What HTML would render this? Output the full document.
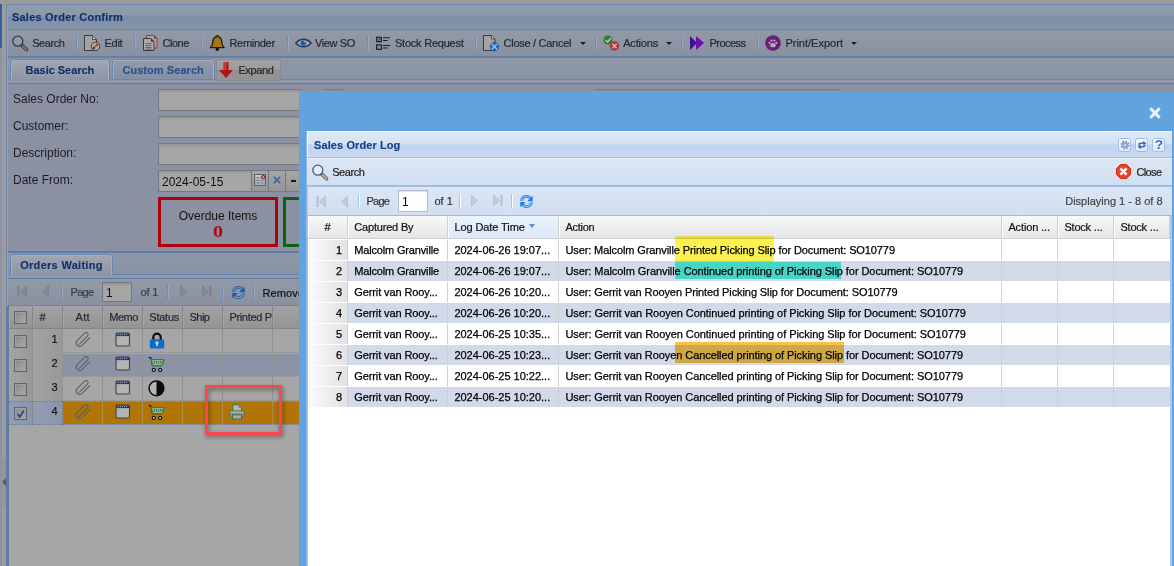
<!DOCTYPE html>
<html><head><meta charset="utf-8">
<style>
*{box-sizing:border-box;margin:0;padding:0}
html,body{width:1174px;height:566px;overflow:hidden}
body{position:relative;background:#9c9c9c;font-family:"Liberation Sans",sans-serif;font-size:11px;color:#222}
.a{position:absolute}
.t{position:absolute;white-space:nowrap;line-height:14px;font-size:11px;-webkit-text-stroke:.2px currentColor}
.b{font-weight:bold;-webkit-text-stroke:.1px currentColor}
svg{position:absolute;overflow:visible}
#bg .t{color:#25282e}
.sep{position:absolute;width:2px;top:36px;height:14px;border-left:1px solid #6f8ab3;border-right:1px solid #9ca7bb}
.inp{position:absolute;left:158px;height:22px;border:1px solid #74787f;background:#a6a6a6;box-shadow:inset 0 2px 2px #979797}
.lbl{position:absolute;left:13px;font-size:12px;line-height:14px;color:#1b1d22;white-space:nowrap}
.gh{position:absolute;top:306px;height:23px;border-right:1px solid #858585;border-left:1px solid #a4a4a4;background:linear-gradient(#a3a3a3,#9d9d9d 40%,#939393)}
.gr{position:absolute;left:9px;width:300px;height:24px;border-top:1px solid #a6a6a6;border-bottom:1px solid #9a9a9a;background:#a6a6a6}
.gr i{position:absolute;top:-1px;height:24px;width:1px;background:#929292}
.cb{position:absolute;width:13px;height:13px;border:1px solid #5f6670;background:linear-gradient(135deg,#8b8b8b,#a9a9a9);box-shadow:inset 0 0 0 1px #9f9f9f}
#win .t{color:#111}
.hd{position:absolute;top:216px;height:23px;border-right:1px solid #d0d0d0;border-left:1px solid #fff;background:linear-gradient(#f9f9f9,#e3e4e6)}
.row{position:absolute;left:308px;width:862px;height:21px;border-top:1px solid #fff;border-bottom:1px solid #fafafa;background:#fff}
.row.alt{background:#d2daea;border-bottom-color:#d2daea}
.row i{position:absolute;top:0;height:20px;width:1px;background:#d0d0d0}
.row span{position:absolute;top:3px;line-height:14px;font-size:11px;white-space:nowrap;color:#000;-webkit-text-stroke:.25px #000}
.ws{position:absolute;width:2px;height:14px;top:194px;border-left:1px solid #98c8ff;border-right:1px solid #fff}
</style></head><body>
<div id="bg">
<div class="a" style="left:0;top:0;width:1174px;height:4px;background:#9c9c9c"></div>
<div class="a" style="left:0;top:4px;width:2px;height:44px;background:#33629b"></div>
<div class="a" style="left:0;top:48px;width:2px;height:518px;background:#8a93ab"></div>
<div class="a" style="left:2px;top:4px;width:4px;height:562px;background:#9b9b9b"></div>
<div class="a" style="left:6px;top:4px;width:1168px;height:26px;border:1px solid #6c86ad;border-right:0;background:linear-gradient(#919dad 0,#8b98ab 46%,#7c8da6 50%,#8696ad 100%)"></div>
<div class="a" style="left:6px;top:30px;width:1168px;height:28px;border-left:1px solid #6c86ad;border-bottom:2px solid #647fa8;background:linear-gradient(#9299a6,#8990a1)"></div>
<div class="a" style="left:6px;top:58px;width:1168px;height:22px;border-left:1px solid #6c86ad;background:linear-gradient(#9098a7,#8792a6)"></div>
<div class="a" style="left:6px;top:79px;width:1168px;height:5px;background:#9099ab;border-top:1px solid #6c86ad;border-bottom:1px solid #607ca6;border-left:1px solid #6c86ad"></div>
<div class="a" style="left:6px;top:84px;width:1168px;height:169px;border-left:1px solid #6c86ad;border-bottom:2px solid #607ca6;background:#8b91a2"></div>
<div class="a" style="left:7px;top:5px;width:1px;height:561px;background:#93a1ba"></div>
<div class="t b" style="left:12px;top:10px;letter-spacing:0.209px;color:#102f68;">Sales Order Confirm</div>
<div class="t" style="left:32.2px;top:36px;letter-spacing:-0.429px;">Search</div>
<div class="t" style="left:104.5px;top:36px;letter-spacing:-0.267px;">Edit</div>
<div class="t" style="left:162.4px;top:36px;letter-spacing:-0.45px;">Clone</div>
<div class="t" style="left:229.4px;top:36px;letter-spacing:-0.286px;">Reminder</div>
<div class="t" style="left:315px;top:36px;letter-spacing:-0.373px;">View SO</div>
<div class="t" style="left:395px;top:36px;letter-spacing:-0.23px;">Stock Request</div>
<div class="t" style="left:503.6px;top:36px;letter-spacing:-0.283px;">Close / Cancel</div>
<div class="a" style="left:580px;top:42px;border:3px solid transparent;border-top:3px solid #1c1c1c;border-bottom:0"></div>
<div class="t" style="left:623.2px;top:36px;letter-spacing:-0.185px;">Actions</div>
<div class="a" style="left:666px;top:42px;border:3px solid transparent;border-top:3px solid #1c1c1c;border-bottom:0"></div>
<div class="t" style="left:709.4px;top:36px;letter-spacing:-0.507px;">Process</div>
<div class="t" style="left:785.4px;top:36px;letter-spacing:0.008px;">Print/Export</div>
<div class="a" style="left:851px;top:42px;border:3px solid transparent;border-top:3px solid #1c1c1c;border-bottom:0"></div>
<div class="sep" style="left:76px"></div>
<div class="sep" style="left:134px"></div>
<div class="sep" style="left:201px"></div>
<div class="sep" style="left:287px"></div>
<div class="sep" style="left:367px"></div>
<div class="sep" style="left:475px"></div>
<div class="sep" style="left:595px"></div>
<div class="sep" style="left:681px"></div>
<div class="sep" style="left:757px"></div>
<svg style="left:12px;top:35px" width="16" height="16" viewBox="0 0 16 16"><path d="M9.800 10.200L14.600 14.800" stroke="#27314d" stroke-width="3.400" stroke-linecap="round"/><path d="M10.600 11L14.500 14.700" stroke="#9e7038" stroke-width="2" stroke-linecap="round"/><circle cx="5.800" cy="6.200" r="5" fill="#959ba6" stroke="#2c3650" stroke-width="1.300"/></svg>
<svg style="left:84px;top:35px" width="16" height="16" viewBox="0 0 16 16"><path d="M.5 .5h8l4 4v11h-12z" fill="#a3a3a3" stroke="#3a3a3a"/><path d="M8.500 .8v3.700h3.700" fill="#c9c9c9" stroke="#3a3a3a" stroke-width=".8"/><circle cx="11.500" cy="11.400" r="4.300" fill="#aaa" stroke="#4a2a30" stroke-width=".9"/><path d="M9.900 13l3.200-3.200" stroke="#a86a28" stroke-width="2"/><path d="M9.300 13.600l1-1" stroke="#111" stroke-width="2"/><path d="M12.600 10.300l1-1" stroke="#c01020" stroke-width="2"/></svg>
<svg style="left:143px;top:35px" width="16" height="16" viewBox="0 0 16 16"><path d="M3.500 .5h7.500l3 3v9.500h-10.500z" fill="#a9a9a9" stroke="#b02a34"/><path d="M11 .5v3h3z" fill="#70202a"/><path d="M.5 3.500h7.500l3 3v9h-10.500z" fill="#a9a9a9" stroke="#3a3a3a"/><path d="M8 3.500v3h3z" fill="#2a2a2a"/><path d="M2.500 8.500h6M2.500 10.500h6M2.500 12.500h6M2.500 14.200h6" stroke="#5c5c5c" stroke-width=".9"/></svg>
<svg style="left:210px;top:35px" width="16" height="16" viewBox="0 0 16 16"><path d="M7.300 .6c.9 0 1.300.6 1.300 1.300 2.300.8 3.200 2.800 3.200 5.400 0 2.700 1 3.900 2.400 5.400h-13.800c1.400-1.500 2.400-2.700 2.400-5.400 0-2.600.9-4.600 3.200-5.400 0-.7.400-1.300 1.300-1.300z" fill="#a8740f" stroke="#1c1c1c" stroke-width="1.300" stroke-linejoin="round"/><circle cx="7.300" cy="14.300" r="1.700" fill="#111"/></svg>
<svg style="left:295px;top:35px" width="17" height="16" viewBox="0 0 17 16"><path d="M.8 8C3.200 5.200 5.600 4.200 8.500 4.200s5.300 1 7.700 3.800C13.800 10.800 11.400 11.800 8.500 11.800S3.200 10.800 .8 8z" fill="#9da3ae" stroke="#25355a" stroke-width="1.400"/><circle cx="8.300" cy="8" r="2.600" fill="#1456b0"/><circle cx="9.600" cy="6.800" r=".9" fill="#9da3ae"/></svg>
<svg style="left:376px;top:35px" width="16" height="16" viewBox="0 0 16 16"><rect x=".7" y="2.300" width="4.600" height="4.400" fill="none" stroke="#1c1c1c" stroke-width="1.200"/><rect x=".7" y="9.900" width="4.600" height="4.400" fill="none" stroke="#1c1c1c" stroke-width="1.200"/><path d="M7 2.800h7M7 5.500h4.600M7 10.500h7M7 13h4.500" stroke="#1c1c1c" stroke-width="1.100"/><path d="M1.900 4.400l1 1 1.500-1.900" stroke="#1c1c1c" fill="none" stroke-width=".9"/></svg>
<svg style="left:483px;top:35px" width="16" height="16" viewBox="0 0 16 16"><path d="M.5 .5h8l3.500 3.500v11.500h-11.500z" fill="#a3a3a3" stroke="#3a3a3a"/><path d="M8.500 .8v3.200h3.200" fill="#c9c9c9" stroke="#3a3a3a" stroke-width=".8"/><circle cx="11.400" cy="11.700" r="4.300" fill="#1f6ec4" stroke="#154f94" stroke-width=".6"/><path d="M8.600 8.900l5.600 5.600M14.200 8.900l-5.600 5.600" stroke="#a9c6ea" stroke-width="1.100"/></svg>
<svg style="left:603px;top:35px" width="17" height="16" viewBox="0 0 17 16"><circle cx="5" cy="5" r="4.500" fill="#2f7a34"/><path d="M2.500 5l2 2 3.500-4" stroke="#b5c5b5" stroke-width="1.600" fill="none"/><circle cx="11.500" cy="11" r="4.700" fill="#b0343c"/><path d="M9.300 8.800l4.400 4.400M13.700 8.800l-4.400 4.400" stroke="#c9b3b3" stroke-width="1.600"/></svg>
<svg style="left:690px;top:35px" width="16" height="16" viewBox="0 0 16 16"><path d="M0 1l7 7-7 7z" fill="#3a1788"/><path d="M6 1l8 7-8 7z" fill="#7409b4"/></svg>
<svg style="left:765px;top:35px" width="16" height="16" viewBox="0 0 16 16"><circle cx="8" cy="8" r="7.800" fill="#6a1f78"/><ellipse cx="8" cy="10.200" rx="2.800" ry="2.100" fill="#b9a9bd"/><circle cx="4.600" cy="7.800" r="1.100" fill="#b9a9bd"/><circle cx="6.600" cy="5.600" r="1.100" fill="#b9a9bd"/><circle cx="9.400" cy="5.600" r="1.100" fill="#b9a9bd"/><circle cx="11.400" cy="7.800" r="1.100" fill="#b9a9bd"/></svg>
<div class="a" style="left:10px;top:59px;width:100px;height:22px;border:1px solid #6c86ad;border-bottom:0;border-radius:4px 4px 0 0;background:linear-gradient(#a0a6b1,#8d94a5)"></div>
<div class="a" style="left:11px;top:60px;width:98px;height:21px;border:1px solid #a3aec2;border-bottom:0;border-radius:3px 3px 0 0"></div>
<div class="a" style="left:112px;top:59px;width:103px;height:20px;border:1px solid #6c86ad;border-bottom:0;border-radius:4px 4px 0 0;background:linear-gradient(#939ba9,#8590a6)"></div>
<div class="a" style="left:113px;top:60px;width:101px;height:19px;border:1px solid #a3aec2;border-bottom:0;border-radius:3px 3px 0 0"></div>
<div class="a" style="left:216px;top:59px;width:65px;height:22px;border:1px solid #868b94;border-radius:3px;background:linear-gradient(#a2a2a2 0,#9c9c9c 48%,#929292 52%,#959595 100%)"></div>
<svg style="left:219px;top:62px" width="14" height="16" viewBox="0 0 14 16"><path d="M4.500 0h5v8h4.500l-7 8-7-8h4.500z" fill="#b01414"/><path d="M5.500 0h1.800v8h-1.800z" fill="#c85050"/></svg>
<div class="t b" style="left:25.6px;top:63px;letter-spacing:-0.038px;color:#102f68;">Basic Search</div>
<div class="t b" style="left:122.4px;top:63px;letter-spacing:0.06px;color:#284f8c;">Custom Search</div>
<div class="t" style="left:238.4px;top:63px;letter-spacing:-0.374px;">Expand</div>
<div class="lbl" style="top:92px">Sales Order No:</div>
<div class="inp" style="top:89px;width:145px"></div>
<div class="lbl" style="top:119px">Customer:</div>
<div class="inp" style="top:116px;width:145px"></div>
<div class="lbl" style="top:146px">Description:</div>
<div class="inp" style="top:143px;width:145px"></div>
<div class="lbl" style="top:173px">Date From:</div>
<div class="inp" style="top:170px;width:94px"></div>
<div class="a" style="left:162px;top:174px;font-size:12px;line-height:16px;color:#111">2024-05-15</div>
<div class="a" style="left:251px;top:170px;width:18px;height:22px;border:1px solid #74787f;background:linear-gradient(#a6a6a6,#969696)"></div>
<svg style="left:254px;top:174px" width="12" height="12" viewBox="0 0 12 12"><rect x=".5" y=".5" width="11" height="11" fill="#b2b7c2" stroke="#5a6070"/><path d="M1 1h10v2H1z" fill="#c4c8d0"/><path d="M4 3.500v7.500M8 3.500v7.500M1 3.500h10M1 6.500h10M1 9h10" stroke="#7d8494" stroke-width=".7"/><circle cx="9.300" cy="3" r="1.600" fill="#c9a9a9" stroke="#7a0c0c" stroke-width="1"/></svg>
<div class="a" style="left:269px;top:170px;width:17px;height:22px;border:1px solid #74787f;border-left:0;background:linear-gradient(#a6a6a6,#969696)"></div>
<svg style="left:273px;top:176px" width="8" height="8" viewBox="0 0 8 8"><path d="M.8.800l6.400 6.400M7.200.800L.8 7.200" stroke="#2c62a8" stroke-width="1.500"/></svg>
<div class="a" style="left:286px;top:170px;width:17px;height:22px;border:1px solid #74787f;border-left:0;background:linear-gradient(#a6a6a6,#969696)"></div>
<div class="a" style="left:291px;top:180px;width:5px;height:2px;background:#1a1a1a"></div>
<div class="a" style="left:158px;top:197px;width:120px;height:50px;border:3px solid #b0000e"></div>
<div class="a" style="left:158px;top:209px;width:120px;text-align:center;font-size:12px;line-height:14px;color:#111">Overdue Items</div>
<div class="a" style="left:158px;top:221.500px;width:120px;text-align:center;font-family:'Liberation Serif',serif;font-weight:bold;font-size:17px;line-height:20px;color:#b00a0a;transform:scaleX(1.18)">0</div>
<div class="a" style="left:283px;top:197px;width:120px;height:50px;border:3px solid #0a640a"></div>
<div class="a" style="left:324px;top:89px;width:20px;height:22px;border:1px solid #74787f;border-radius:2px;background:#a1a1a1"></div><div class="inp" style="left:595px;top:89px;width:228px"></div><div class="a" style="left:822px;top:89px;width:18px;height:22px;border:1px solid #74787f;background:#a1a1a1"></div>
<div class="a" style="left:6px;top:253px;width:1168px;height:22px;border-left:1px solid #6c86ad;background:linear-gradient(#9098a7,#8792a6)"></div>
<div class="a" style="left:6px;top:274px;width:1168px;height:5px;background:#9099ab;border-top:1px solid #6c86ad;border-bottom:1px solid #607ca6;border-left:1px solid #6c86ad"></div>
<div class="a" style="left:10px;top:254px;width:103px;height:21px;border:1px solid #6c86ad;border-bottom:0;border-radius:4px 4px 0 0;background:linear-gradient(#a0a6b1,#8d94a5)"></div>
<div class="a" style="left:11px;top:255px;width:101px;height:20px;border:1px solid #a3aec2;border-bottom:0;border-radius:3px 3px 0 0"></div>
<div class="a" style="left:6px;top:279px;width:1168px;height:27px;border-left:1px solid #6c86ad;border-bottom:1px solid #6c86ad;background:linear-gradient(#9299a6,#8990a1)"></div>
<div class="a" style="left:7px;top:253px;width:1px;height:53px;background:#93a1ba"></div>
<div class="a" style="left:6px;top:306px;width:3px;height:260px;background:#5f7ca5"></div>
<div class="a" style="left:9px;top:306px;width:300px;height:260px;background:#a6a6a6"></div>
<div class="t b" style="left:20.2px;top:258px;letter-spacing:0.295px;color:#102f68;">Orders Waiting</div>
<svg style="left:17px;top:286px" width="10" height="11" viewBox="0 0 10 11"><path d="M.5 0h2v11h-2z" fill="#7c8088"/><path d="M9.500 0L3.500 5.500l6 5.500z" fill="#84888f" stroke="#74787f" stroke-width=".6"/></svg>
<svg style="left:42px;top:286px" width="7" height="11" viewBox="0 0 7 11"><path d="M6.500 0L.5 5.500l6 5.500z" fill="#84888f" stroke="#74787f" stroke-width=".6"/></svg>
<div class="sep" style="left:61px;top:285px"></div>
<div class="a" style="left:102px;top:282px;width:30px;height:20px;border:1px solid #74787f;background:#a6a6a6;box-shadow:inset 0 2px 2px #979797"></div>
<div class="a" style="left:106px;top:285px;font-size:12px;line-height:16px;color:#111">1</div>
<div class="sep" style="left:167px;top:285px"></div>
<svg style="left:180px;top:286px" width="7" height="11" viewBox="0 0 7 11"><path d="M.5 0l6 5.500-6 5.500z" fill="#84888f" stroke="#74787f" stroke-width=".6"/></svg>
<svg style="left:202px;top:286px" width="10" height="11" viewBox="0 0 10 11"><path d="M.5 0l6 5.500-6 5.500z" fill="#84888f" stroke="#74787f" stroke-width=".6"/><path d="M7.500 0h2v11h-2z" fill="#7c8088"/></svg>
<div class="sep" style="left:222px;top:285px"></div>
<div class="sep" style="left:253px;top:285px"></div>
<div class="t" style="left:70.6px;top:285px;letter-spacing:-0.755px;color:#3a3d44;">Page</div>
<div class="t" style="left:140.4px;top:285px;letter-spacing:-0.094px;color:#3a3d44;">of 1</div>
<div class="t" style="left:262.500px;top:285.500px;letter-spacing:0.131px;color:#111">Remove</div>
<svg style="left:230.5px;top:284.5px" width="15" height="15" viewBox="0 0 16 16"><path d="M2.700 7.300A5.300 5.300 0 0 1 12 4.500" fill="none" stroke="#1f569f" stroke-width="3"/><path d="M2.700 7.300A5.300 5.300 0 0 1 12 4.500" fill="none" stroke="#5f8fd0" stroke-width="1.400"/><path d="M14.600 1.800v5.800H8.800z" fill="#1f569f"/><path d="M13.300 8.700A5.300 5.300 0 0 1 4 11.500" fill="none" stroke="#1f569f" stroke-width="3"/><path d="M13.300 8.700A5.300 5.300 0 0 1 4 11.500" fill="none" stroke="#6a98d6" stroke-width="1.400"/><path d="M1.400 14.200V8.400h5.800z" fill="#1f569f"/></svg>
<div class="gh" style="left:9px;width:24px"></div>
<div class="gh" style="left:33px;width:30px"></div>
<div class="gh" style="left:63px;width:40px"></div>
<div class="gh" style="left:103px;width:40px"></div>
<div class="gh" style="left:143px;width:40px"></div>
<div class="gh" style="left:183px;width:40px"></div>
<div class="gh" style="left:223px;width:50px"></div>
<div class="gh" style="left:273px;width:40px"></div>
<div class="a" style="left:9px;top:328px;width:300px;height:1px;background:#858585"></div>
<div class="cb" style="left:14px;top:311px"></div>
<div class="t" style="left:39.6px;top:310px;">#</div>
<div class="t" style="left:75.6px;top:310px;letter-spacing:0.21px;">Att</div>
<div class="t" style="left:109.2px;top:310px;letter-spacing:-0.441px;">Memo</div>
<div class="t" style="left:149.3px;top:310px;letter-spacing:-0.236px;">Status</div>
<div class="t" style="left:189.5px;top:310px;letter-spacing:-0.533px;">Ship</div>
<div class="a" style="left:224px;top:306px;width:48px;height:23px;overflow:hidden"><div class="t" style="left:5.400px;top:4px;letter-spacing:-0.32px">Printed Pi</div></div>
<div class="gr" style="top:329px;background:#a6a6a6;">
<div class="a" style="left:0;top:-1px;width:23px;height:24px;background:linear-gradient(90deg,#a3a3a3,#989898);"></div>
<div class="a" style="left:24px;top:-1px;width:29px;height:24px;background:linear-gradient(90deg,#a3a3a3,#989898);"></div>
<i style="left:23px"></i>
<i style="left:53px"></i>
<i style="left:93px"></i>
<i style="left:133px"></i>
<i style="left:173px"></i>
<i style="left:213px"></i>
<i style="left:263px"></i>
</div>
<div class="cb" style="left:14px;top:335px"></div>
<div class="t" style="left:32.500px;width:25px;text-align:right;top:332px;color:#111">1</div>
<div class="gr" style="top:353px;background:#8c93a5;">
<div class="a" style="left:0;top:-1px;width:23px;height:24px;background:linear-gradient(90deg,#a3a3a3,#989898);"></div>
<div class="a" style="left:24px;top:-1px;width:29px;height:24px;background:linear-gradient(90deg,#a3a3a3,#989898);"></div>
<i style="left:23px"></i>
<i style="left:53px"></i>
<i style="left:93px"></i>
<i style="left:133px"></i>
<i style="left:173px"></i>
<i style="left:213px"></i>
<i style="left:263px"></i>
</div>
<div class="cb" style="left:14px;top:359px"></div>
<div class="t" style="left:32.500px;width:25px;text-align:right;top:356px;color:#111">2</div>
<div class="gr" style="top:377px;background:#a6a6a6;">
<div class="a" style="left:0;top:-1px;width:23px;height:24px;background:linear-gradient(90deg,#a3a3a3,#989898);"></div>
<div class="a" style="left:24px;top:-1px;width:29px;height:24px;background:linear-gradient(90deg,#a3a3a3,#989898);"></div>
<i style="left:23px"></i>
<i style="left:53px"></i>
<i style="left:93px"></i>
<i style="left:133px"></i>
<i style="left:173px"></i>
<i style="left:213px"></i>
<i style="left:263px"></i>
</div>
<div class="cb" style="left:14px;top:383px"></div>
<div class="t" style="left:32.500px;width:25px;text-align:right;top:380px;color:#111">3</div>
<div class="gr" style="top:401px;background:#b07505;border-top:1px dotted #8f98ad;border-bottom:1px dotted #8f98ad;">
<div class="a" style="left:0;top:-1px;width:23px;height:24px;background:linear-gradient(90deg,#909db2,#8a96ab);border-top:1px dotted #7b7974;border-bottom:1px dotted #7b7974;"></div>
<div class="a" style="left:24px;top:-1px;width:29px;height:24px;background:linear-gradient(90deg,#909db2,#8a96ab);border-top:1px dotted #7b7974;border-bottom:1px dotted #7b7974;"></div>
<i style="left:23px;background:#8b97ac;border-left:1px dotted #77797f"></i>
<i style="left:53px;background:#8b97ac;border-left:1px dotted #77797f"></i>
<i style="left:93px;background:none;border-left:1px dotted #bf9f62"></i>
<i style="left:133px;background:none;border-left:1px dotted #bf9f62"></i>
<i style="left:173px;background:none;border-left:1px dotted #bf9f62"></i>
<i style="left:213px;background:none;border-left:1px dotted #bf9f62"></i>
<i style="left:263px;background:none;border-left:1px dotted #bf9f62"></i>
</div>
<div class="cb" style="left:14px;top:407px"></div>
<div class="t" style="left:32.500px;width:25px;text-align:right;top:404px;color:#111">4</div>
<svg style="left:75px;top:331px" width="16" height="17" viewBox="0 0 16 17"><path d="M4.200 13.400l8.300-8.300a2.050 2.050 0 0 0-2.900-2.900L2 9.800a3.400 3.400 0 0 0 4.800 4.800l7.800-7.800" fill="none" stroke="#5b5f68" stroke-width="1.100" stroke-linecap="round"/></svg>
<svg style="left:115px;top:331.5px" width="16" height="15" viewBox="0 0 16 15"><rect x="1" y="1" width="13.500" height="13" rx="1.200" fill="#b3b3b3" stroke="#3a3f4d" stroke-width="1.100"/><path d="M1.500 1.500h12.500v2.600H1.500z" fill="#1d2d5c"/><path d="M2.800 2.700h10" stroke="#9fb0d0" stroke-width="1.200" stroke-dasharray="1 1"/></svg>
<svg style="left:75px;top:355px" width="16" height="17" viewBox="0 0 16 17"><path d="M4.200 13.400l8.300-8.300a2.050 2.050 0 0 0-2.900-2.900L2 9.800a3.400 3.400 0 0 0 4.800 4.800l7.800-7.800" fill="none" stroke="#5b5f68" stroke-width="1.100" stroke-linecap="round"/></svg>
<svg style="left:115px;top:355.5px" width="16" height="15" viewBox="0 0 16 15"><rect x="1" y="1" width="13.500" height="13" rx="1.200" fill="#b3b3b3" stroke="#3a3f4d" stroke-width="1.100"/><path d="M1.500 1.500h12.500v2.600H1.500z" fill="#1d2d5c"/><path d="M2.800 2.700h10" stroke="#9fb0d0" stroke-width="1.200" stroke-dasharray="1 1"/></svg>
<svg style="left:75px;top:379px" width="16" height="17" viewBox="0 0 16 17"><path d="M4.200 13.400l8.300-8.300a2.050 2.050 0 0 0-2.900-2.900L2 9.800a3.400 3.400 0 0 0 4.800 4.800l7.800-7.800" fill="none" stroke="#5b5f68" stroke-width="1.100" stroke-linecap="round"/></svg>
<svg style="left:115px;top:379.5px" width="16" height="15" viewBox="0 0 16 15"><rect x="1" y="1" width="13.500" height="13" rx="1.200" fill="#b3b3b3" stroke="#3a3f4d" stroke-width="1.100"/><path d="M1.500 1.500h12.500v2.600H1.500z" fill="#1d2d5c"/><path d="M2.800 2.700h10" stroke="#9fb0d0" stroke-width="1.200" stroke-dasharray="1 1"/></svg>
<svg style="left:75px;top:403px" width="16" height="17" viewBox="0 0 16 17"><path d="M4.200 13.400l8.300-8.300a2.050 2.050 0 0 0-2.900-2.900L2 9.800a3.400 3.400 0 0 0 4.800 4.800l7.800-7.800" fill="none" stroke="#5b5f68" stroke-width="1.100" stroke-linecap="round"/></svg>
<svg style="left:115px;top:403.5px" width="16" height="15" viewBox="0 0 16 15"><rect x="1" y="1" width="13.500" height="13" rx="1.200" fill="#b3b3b3" stroke="#3a3f4d" stroke-width="1.100"/><path d="M1.500 1.500h12.500v2.600H1.500z" fill="#1d2d5c"/><path d="M2.800 2.700h10" stroke="#9fb0d0" stroke-width="1.200" stroke-dasharray="1 1"/></svg>
<svg style="left:16px;top:409px" width="10" height="10" viewBox="0 0 10 10"><path d="M1.500 5l2.300 2.800 4.200-6.300" fill="none" stroke="#27408c" stroke-width="1.600"/></svg>
<svg style="left:149px;top:332px" width="16" height="17" viewBox="0 0 16 17"><path d="M4.300 8V5.300a3.700 3.700 0 0 1 7.400 0V8" fill="none" stroke="#0c0c0c" stroke-width="2.200"/><rect x=".8" y="7.200" width="14.400" height="9.300" rx="1.600" fill="#0d6cc9"/><circle cx="8" cy="10.800" r="1.600" fill="#c9d9ee"/><path d="M8 11v3.200" stroke="#c9d9ee" stroke-width="1.600"/></svg>
<svg style="left:148px;top:356px" width="17" height="17" viewBox="0 0 17 17"><path d="M.6 1.200l2.300.8 1.600 7.600h8.400" fill="none" stroke="#1c1c1c" stroke-width="1.200"/><path d="M3.400 3.600h12.800l-2.200 5.800H4.700z" fill="#b8c8b8" stroke="#2e8a38" stroke-width="1.300" stroke-linejoin="round"/><path d="M6.200 4.800v3.200M8.200 4.800v3.200M10.200 4.800v3.200M12.200 4.800v3.200M14 4.800v2.500" stroke="#1e5a26" stroke-width=".9"/><circle cx="5.800" cy="13.900" r="1.600" fill="#b5b5b5" stroke="#0c0c0c" stroke-width="1.100"/><circle cx="12.200" cy="13.900" r="1.600" fill="#b5b5b5" stroke="#0c0c0c" stroke-width="1.100"/></svg>
<svg style="left:148px;top:380px" width="17" height="17" viewBox="0 0 17 17"><circle cx="8.500" cy="8.300" r="7.400" fill="#b5b5b5" stroke="#0a0a0a" stroke-width="1.500"/><path d="M8.500 .9a7.400 7.400 0 0 1 0 14.800z" fill="#0a0a0a"/></svg>
<svg style="left:148px;top:404px" width="17" height="17" viewBox="0 0 17 17"><path d="M.6 1.200l2.300.8 1.600 7.600h8.400" fill="none" stroke="#1c1c1c" stroke-width="1.200"/><path d="M3.400 3.600h12.800l-2.200 5.800H4.700z" fill="#b8c8b8" stroke="#2e8a38" stroke-width="1.300" stroke-linejoin="round"/><path d="M6.200 4.800v3.200M8.200 4.800v3.200M10.200 4.800v3.200M12.200 4.800v3.200M14 4.800v2.500" stroke="#1e5a26" stroke-width=".9"/><circle cx="5.800" cy="13.900" r="1.600" fill="#b5b5b5" stroke="#0c0c0c" stroke-width="1.100"/><circle cx="12.200" cy="13.900" r="1.600" fill="#b5b5b5" stroke="#0c0c0c" stroke-width="1.100"/></svg>
<svg style="left:229px;top:404px" width="16" height="16" viewBox="0 0 16 16"><path d="M3.800 .8h5.700l3 3v4H3.800z" fill="#b9b9b9" stroke="#2f7a38" stroke-width="1"/><path d="M9.300 .8v3.200h3.200z" fill="#8a8a8a"/><rect x=".6" y="6.800" width="14.800" height="6.400" rx="2" fill="#8f8f8f" stroke="#5a5a5a" stroke-width=".8"/><path d="M1.500 8.200h13" stroke="#b5b5b5" stroke-width="1.200"/><rect x="3.500" y="10.800" width="9" height="4.200" fill="#a9a9a9" stroke="#2f7a38" stroke-width="1"/></svg>
<div class="a" style="left:2px;top:458px;width:4px;height:48px;background:#959595"></div><div class="a" style="left:2px;top:478px;border:4px solid transparent;border-right:4px solid #5a5a5a;border-left:0"></div>
<div class="a" style="left:205px;top:385px;width:77px;height:50px;border:3px solid #f9474b;filter:drop-shadow(1.500px 2.500px 2px rgba(40,20,20,.5))"></div>
</div>
<div id="win">
<div class="a" style="left:299px;top:90px;width:875px;height:1px;background:#8d8f96"></div>
<div class="a" style="left:299px;top:91px;width:875px;height:475px;background:#62a3df"></div>
<svg style="left:1149px;top:107px" width="12" height="12" viewBox="0 0 12 12"><path d="M1.300 1.300l9.400 9.400M10.700 1.300l-9.400 9.400" stroke="#eaf2fb" stroke-width="3"/></svg>
<div class="a" style="left:307px;top:131px;width:865px;height:435px;background:#fff"></div>
<div class="a" style="left:307px;top:131px;width:865px;height:27px;border-top:1px solid #f2f6fb;border-left:1px solid #f2f6fb;border-bottom:1px solid #99bbe8;background:linear-gradient(#dfe9f5 0,#d5e1f3 48%,#bfd2ed 52%,#cad9f0 100%)"></div>
<div class="a" style="left:307px;top:158px;width:865px;height:28px;border-top:1px solid #eef3fa;border-bottom:1px solid #99bbe8;background:linear-gradient(#dbe6f4,#d2dff1)"></div>
<div class="a" style="left:307px;top:186px;width:865px;height:30px;border-top:1px solid #9fc0ea;border-left:1px solid #a9c8ee;border-bottom:1px solid #99bbe8;background:linear-gradient(#dbe6f4,#d2dff1)"></div>
<svg style="left:312px;top:164px" width="16" height="16" viewBox="0 0 16 16"><path d="M9.800 10.200L14.600 14.800" stroke="#3b4f7a" stroke-width="3.400" stroke-linecap="round"/><path d="M10.600 11L14.500 14.700" stroke="#e8a858" stroke-width="2" stroke-linecap="round"/><circle cx="5.800" cy="6.200" r="5" fill="#e6edf6" stroke="#4a5a80" stroke-width="1.300"/></svg>
<svg style="left:1116px;top:164px" width="15" height="15" viewBox="0 0 15 15"><path d="M4.500 .5h6l4 4v6l-4 4h-6l-4-4v-6z" fill="#e8402a" stroke="#c8301c" stroke-width="1"/><path d="M4.400 4.400l6.200 6.200M10.600 4.400l-6.200 6.200" stroke="#fff" stroke-width="2.500"/></svg>
<div class="t b" style="left:314px;top:138px;letter-spacing:0.098px;color:#113c86;">Sales Order Log</div>
<div class="t" style="left:332.2px;top:165px;letter-spacing:-0.429px;color:#222;">Search</div>
<div class="t" style="left:1136.4px;top:165px;letter-spacing:-0.625px;color:#222;">Close</div>
<svg style="left:316px;top:195.500px" width="10" height="11" viewBox="0 0 10 11"><path d="M.5 0h2v11h-2z" fill="#b8bfcb"/><path d="M9.500 0L3.500 5.500l6 5.500z" fill="#c6cbd4" stroke="#adb4c0" stroke-width=".6"/></svg>
<svg style="left:341px;top:195.500px" width="7" height="11" viewBox="0 0 7 11"><path d="M6.500 0L.5 5.500l6 5.500z" fill="#c6cbd4" stroke="#adb4c0" stroke-width=".6"/></svg>
<div class="ws" style="left:358px"></div>
<div class="a" style="left:398px;top:190px;width:30px;height:22px;border:1px solid #b5b8c8;background:#fff;box-shadow:inset 0 1px 1px #e3e3e3"></div>
<div class="a" style="left:402px;top:194px;font-size:12px;line-height:16px;color:#000">1</div>
<div class="ws" style="left:459px"></div>
<svg style="left:470.500px;top:195px" width="7" height="11" viewBox="0 0 7 11"><path d="M.5 0l6 5.500-6 5.500z" fill="#c6cbd4" stroke="#adb4c0" stroke-width=".6"/></svg>
<svg style="left:493px;top:195px" width="10" height="11" viewBox="0 0 10 11"><path d="M.5 0l6 5.500-6 5.500z" fill="#c6cbd4" stroke="#adb4c0" stroke-width=".6"/><path d="M7.500 0h2v11h-2z" fill="#b8bfcb"/></svg>
<div class="ws" style="left:511px"></div>
<div class="t" style="left:366.4px;top:194px;letter-spacing:-0.705px;color:#333;">Page</div>
<div class="t" style="left:434.4px;top:194px;letter-spacing:0.006px;color:#333;">of 1</div>
<div class="t" style="left:1065.2px;top:194px;letter-spacing:0.01px;color:#444;">Displaying 1 - 8 of 8</div>
<svg style="left:518.5px;top:193.5px" width="15" height="15" viewBox="0 0 16 16"><path d="M2.700 7.300A5.300 5.300 0 0 1 12 4.500" fill="none" stroke="#1f78e6" stroke-width="3"/><path d="M2.700 7.300A5.300 5.300 0 0 1 12 4.500" fill="none" stroke="#7ab8f7" stroke-width="1.400"/><path d="M14.600 1.800v5.800H8.800z" fill="#1f78e6"/><path d="M13.300 8.700A5.300 5.300 0 0 1 4 11.500" fill="none" stroke="#1f78e6" stroke-width="3"/><path d="M13.300 8.700A5.300 5.300 0 0 1 4 11.500" fill="none" stroke="#8cc2f8" stroke-width="1.400"/><path d="M1.400 14.200V8.400h5.800z" fill="#1f78e6"/></svg>
<div class="a" style="left:1118px;top:138px;width:13px;height:14px;border:1px solid #9fbfea;border-radius:3px;background:linear-gradient(#f9fbfe,#dfe9f8)"></div>
<div class="a" style="left:1135px;top:138px;width:13px;height:14px;border:1px solid #9fbfea;border-radius:3px;background:linear-gradient(#f9fbfe,#dfe9f8)"></div>
<div class="a" style="left:1152px;top:138px;width:13px;height:14px;border:1px solid #9fbfea;border-radius:3px;background:linear-gradient(#f9fbfe,#dfe9f8)"></div>
<svg style="left:1119.500px;top:140px" width="10" height="10" viewBox="0 0 10 10"><circle cx="5" cy="5" r="3.900" fill="none" stroke="#7f8bd0" stroke-width="1.400" stroke-dasharray="1.500 1.563"/><circle cx="5" cy="5" r="3.300" fill="#8f9ad6"/><circle cx="5" cy="5" r="1.500" fill="#cdd4f2"/></svg>
<svg style="left:1136.500px;top:140px" width="10" height="10" viewBox="0 0 10 10"><path d="M1 5.200C1 3.200 2.300 2.600 4 2.600h2.200V.8L9.400 3.300 6.200 5.800V4.100H4c-1 0-1.600.2-1.600 1.100z" fill="#3868b8"/><path d="M9 4.800C9 6.800 7.700 7.400 6 7.400H3.800v1.800L.6 6.700 3.800 4.200v1.700H6c1 0 1.600-.2 1.600-1.100z" fill="#3868b8"/></svg>
<div class="a b" style="left:1153.500px;top:137.500px;font-size:12px;line-height:14px;color:#3d6fc0;width:10px;text-align:center;transform:scaleX(1.15)">?</div>
<div class="hd" style="left:308px;width:40px;"></div>
<div class="hd" style="left:348px;width:100px;"></div>
<div class="hd" style="left:448px;width:111px;background:linear-gradient(#ebf3fd,#d9e8fb);"></div>
<div class="hd" style="left:559px;width:443px;"></div>
<div class="hd" style="left:1002px;width:56px;"></div>
<div class="hd" style="left:1058px;width:56px;"></div>
<div class="hd" style="left:1114px;width:56px;"></div>
<div class="a" style="left:308px;top:238px;width:862px;height:1px;background:#d0d0d0"></div>
<div class="a" style="left:1170px;top:216px;width:2px;height:350px;background:#a9c8ee"></div>
<div class="a" style="left:306px;top:131px;width:1px;height:435px;background:#8fb8e8"></div>
<div class="a" style="left:307px;top:216px;width:1px;height:350px;background:#a9c8ee"></div>
<div class="t" style="left:324.4px;top:220px;">#</div>
<div class="t" style="left:354.3px;top:220px;letter-spacing:-0.19px;">Captured By</div>
<div class="t" style="left:454.4px;top:220px;letter-spacing:-0.091px;">Log Date Time</div>
<div class="t" style="left:565.4px;top:220px;letter-spacing:-0.266px;">Action</div>
<div class="t" style="left:1008.4px;top:220px;letter-spacing:-0.124px;">Action ...</div>
<div class="t" style="left:1064.4px;top:220px;letter-spacing:-0.198px;">Stock ...</div>
<div class="t" style="left:1120.4px;top:220px;letter-spacing:-0.198px;">Stock ...</div>
<div class="a" style="left:529px;top:224px;border:3.500px solid transparent;border-top:4px solid #5b8fd6;border-bottom:0"></div>
<div class="row" style="top:239px">
<div class="a" style="left:0;top:0;width:40px;height:20px;background:linear-gradient(90deg,#fbfbfb,#e2e2e4);border-right:1px solid #d0d0d0"></div>
<i style="left:139px"></i>
<i style="left:250px"></i>
<i style="left:693px"></i>
<i style="left:749px"></i>
<i style="left:805px"></i>
<span style="left:0;width:34px;text-align:right">1</span>
<span style="left:46.300px;letter-spacing:-0.165px">Malcolm Granville</span><span style="left:146.400px;letter-spacing:-0.012px">2024-06-26 19:07...</span><span style="left:257.400px;letter-spacing:-0.102px">User: Malcolm Granville Printed Picking Slip for Document: SO10779</span>
</div>
<div class="row alt" style="top:260px">
<div class="a" style="left:0;top:0;width:40px;height:20px;background:linear-gradient(90deg,#fbfbfb,#e2e2e4);border-right:1px solid #d0d0d0"></div>
<i style="left:139px"></i>
<i style="left:250px"></i>
<i style="left:693px"></i>
<i style="left:749px"></i>
<i style="left:805px"></i>
<span style="left:0;width:34px;text-align:right">2</span>
<span style="left:46.300px;letter-spacing:-0.165px">Malcolm Granville</span><span style="left:146.400px;letter-spacing:-0.012px">2024-06-26 19:07...</span><span style="left:257.400px;letter-spacing:-0.065px">User: Malcolm Granville Continued printing of Picking Slip for Document: SO10779</span>
</div>
<div class="row" style="top:281px">
<div class="a" style="left:0;top:0;width:40px;height:20px;background:linear-gradient(90deg,#fbfbfb,#e2e2e4);border-right:1px solid #d0d0d0"></div>
<i style="left:139px"></i>
<i style="left:250px"></i>
<i style="left:693px"></i>
<i style="left:749px"></i>
<i style="left:805px"></i>
<span style="left:0;width:34px;text-align:right">3</span>
<span style="left:46.300px;letter-spacing:-0.108px">Gerrit van Rooy...</span><span style="left:146.400px;letter-spacing:-0.012px">2024-06-26 10:20...</span><span style="left:257.400px;letter-spacing:-0.09px">User: Gerrit van Rooyen Printed Picking Slip for Document: SO10779</span>
</div>
<div class="row alt" style="top:302px">
<div class="a" style="left:0;top:0;width:40px;height:20px;background:linear-gradient(90deg,#fbfbfb,#e2e2e4);border-right:1px solid #d0d0d0"></div>
<i style="left:139px"></i>
<i style="left:250px"></i>
<i style="left:693px"></i>
<i style="left:749px"></i>
<i style="left:805px"></i>
<span style="left:0;width:34px;text-align:right">4</span>
<span style="left:46.300px;letter-spacing:-0.108px">Gerrit van Rooy...</span><span style="left:146.400px;letter-spacing:-0.012px">2024-06-26 10:20...</span><span style="left:257.400px;letter-spacing:-0.053px">User: Gerrit van Rooyen Continued printing of Picking Slip for Document: SO10779</span>
</div>
<div class="row" style="top:323px">
<div class="a" style="left:0;top:0;width:40px;height:20px;background:linear-gradient(90deg,#fbfbfb,#e2e2e4);border-right:1px solid #d0d0d0"></div>
<i style="left:139px"></i>
<i style="left:250px"></i>
<i style="left:693px"></i>
<i style="left:749px"></i>
<i style="left:805px"></i>
<span style="left:0;width:34px;text-align:right">5</span>
<span style="left:46.300px;letter-spacing:-0.108px">Gerrit van Rooy...</span><span style="left:146.400px;letter-spacing:-0.012px">2024-06-25 10:35...</span><span style="left:257.400px;letter-spacing:-0.053px">User: Gerrit van Rooyen Continued printing of Picking Slip for Document: SO10779</span>
</div>
<div class="row alt" style="top:344px">
<div class="a" style="left:0;top:0;width:40px;height:20px;background:linear-gradient(90deg,#fbfbfb,#e2e2e4);border-right:1px solid #d0d0d0"></div>
<i style="left:139px"></i>
<i style="left:250px"></i>
<i style="left:693px"></i>
<i style="left:749px"></i>
<i style="left:805px"></i>
<span style="left:0;width:34px;text-align:right">6</span>
<span style="left:46.300px;letter-spacing:-0.108px">Gerrit van Rooy...</span><span style="left:146.400px;letter-spacing:-0.012px">2024-06-25 10:23...</span><span style="left:257.400px;letter-spacing:-0.074px">User: Gerrit van Rooyen Cancelled printing of Picking Slip for Document: SO10779</span>
</div>
<div class="row" style="top:365px">
<div class="a" style="left:0;top:0;width:40px;height:20px;background:linear-gradient(90deg,#fbfbfb,#e2e2e4);border-right:1px solid #d0d0d0"></div>
<i style="left:139px"></i>
<i style="left:250px"></i>
<i style="left:693px"></i>
<i style="left:749px"></i>
<i style="left:805px"></i>
<span style="left:0;width:34px;text-align:right">7</span>
<span style="left:46.300px;letter-spacing:-0.108px">Gerrit van Rooy...</span><span style="left:146.400px;letter-spacing:-0.012px">2024-06-25 10:22...</span><span style="left:257.400px;letter-spacing:-0.074px">User: Gerrit van Rooyen Cancelled printing of Picking Slip for Document: SO10779</span>
</div>
<div class="row alt" style="top:386px">
<div class="a" style="left:0;top:0;width:40px;height:20px;background:linear-gradient(90deg,#fbfbfb,#e2e2e4);border-right:1px solid #d0d0d0"></div>
<i style="left:139px"></i>
<i style="left:250px"></i>
<i style="left:693px"></i>
<i style="left:749px"></i>
<i style="left:805px"></i>
<span style="left:0;width:34px;text-align:right">8</span>
<span style="left:46.300px;letter-spacing:-0.108px">Gerrit van Rooy...</span><span style="left:146.400px;letter-spacing:-0.012px">2024-06-25 10:20...</span><span style="left:257.400px;letter-spacing:-0.074px">User: Gerrit van Rooyen Cancelled printing of Picking Slip for Document: SO10779</span>
</div>
<div class="a" style="left:675px;top:236px;width:99px;height:26px;background:#fdf150;mix-blend-mode:multiply"></div>
<div class="a" style="left:675px;top:262px;width:166px;height:17px;background:#57f9da;mix-blend-mode:multiply"></div>
<div class="a" style="left:675px;top:342px;width:169px;height:21px;background:#fbc34c;mix-blend-mode:multiply"></div>
</div></body></html>
